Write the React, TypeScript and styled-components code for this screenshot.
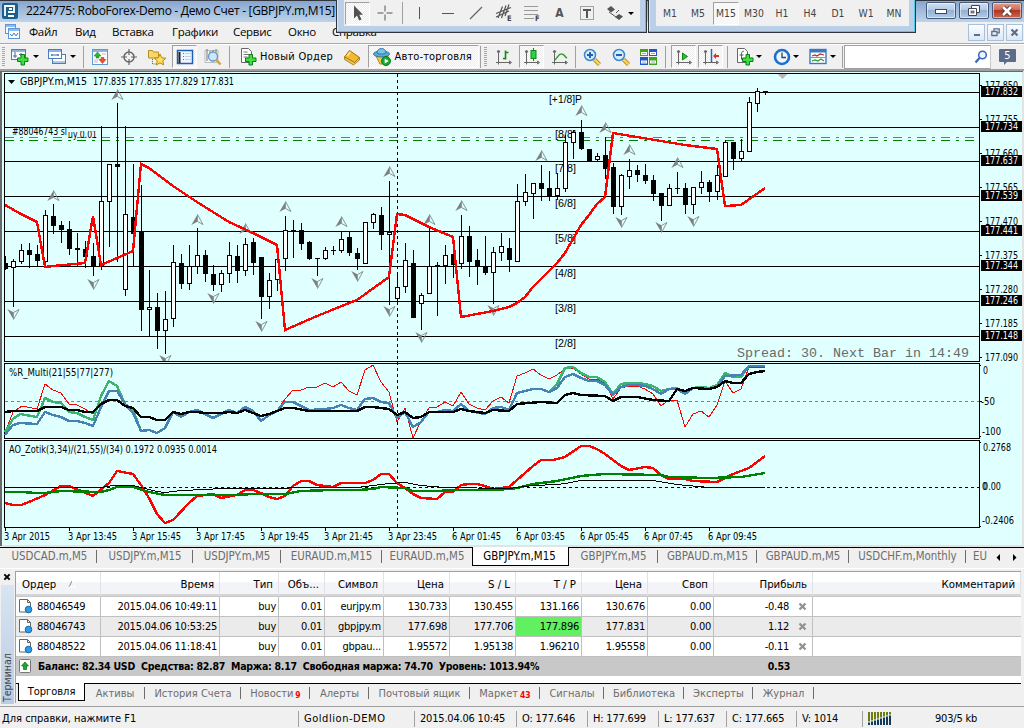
import styled, {createGlobalStyle} from "styled-components";
import * as React from "react";

type Candle = [number, number, number, number, number];

// high, body top, body bottom, low, 1 = rising
const candles: Candle[] = [
    [256, 263, 268, 269, 0], [259, 261, 267, 306, 1], [244, 250, 261, 263, 1], [243, 250, 254, 267, 0],
    [245, 254, 260, 266, 0], [210, 215, 261, 267, 1], [204, 216, 225, 233, 0], [221, 225, 229, 242, 0],
    [221, 229, 248, 254, 0], [233, 248, 249, 265, 0], [241, 249, 256, 267, 0], [243, 256, 266, 275, 0],
    [126, 201, 265, 269, 1], [164, 164, 201, 246, 1], [103, 164, 166, 261, 0], [126, 214, 289, 295, 1],
    [164, 217, 233, 266, 0], [185, 231, 309, 330, 0], [270, 307, 309, 336, 1], [293, 307, 330, 348, 0],
    [291, 319, 330, 353, 1], [245, 262, 318, 326, 1], [254, 263, 283, 288, 0], [245, 266, 283, 289, 1],
    [228, 255, 266, 273, 1], [250, 255, 273, 281, 0], [265, 274, 284, 290, 0], [270, 273, 284, 291, 1],
    [242, 255, 273, 282, 1], [245, 256, 270, 282, 0], [238, 244, 270, 275, 1], [238, 242, 262, 274, 0],
    [257, 257, 296, 318, 0], [273, 280, 296, 308, 1], [254, 259, 279, 290, 1], [216, 230, 258, 270, 1],
    [220, 230, 231, 257, 0], [223, 230, 243, 249, 0], [241, 242, 258, 259, 0], [258, 258, 258, 275, 0],
    [247, 250, 258, 259, 1], [246, 250, 250, 254, 0], [232, 239, 250, 252, 1], [232, 237, 252, 255, 0],
    [248, 253, 258, 269, 0], [222, 222, 263, 263, 1], [213, 214, 222, 228, 1], [207, 215, 234, 249, 0],
    [181, 232, 234, 304, 1], [272, 287, 298, 300, 1], [243, 260, 286, 292, 1], [250, 263, 317, 317, 0],
    [293, 295, 303, 329, 1], [228, 266, 293, 293, 1], [262, 265, 265, 315, 0], [245, 255, 265, 283, 1],
    [246, 254, 264, 277, 0], [215, 236, 263, 268, 1], [226, 236, 261, 276, 0], [249, 260, 266, 284, 0],
    [236, 267, 272, 274, 0], [247, 252, 272, 303, 1], [233, 246, 252, 260, 1], [238, 248, 259, 271, 0],
    [184, 201, 261, 261, 1], [174, 192, 201, 205, 1], [183, 183, 193, 218, 1], [165, 183, 188, 200, 0],
    [171, 188, 196, 200, 0], [173, 188, 195, 199, 1], [135, 142, 188, 191, 1], [130, 132, 142, 158, 1],
    [120, 132, 148, 149, 0], [149, 149, 160, 161, 0], [153, 156, 159, 161, 1], [137, 155, 168, 178, 0],
    [163, 167, 206, 213, 0], [174, 175, 206, 214, 1], [159, 170, 176, 188, 1], [165, 170, 174, 181, 0],
    [164, 175, 180, 183, 0], [175, 180, 193, 200, 0], [193, 193, 205, 220, 0], [184, 188, 205, 205, 1],
    [172, 188, 188, 193, 0], [183, 188, 204, 213, 0], [187, 187, 204, 213, 1], [171, 182, 187, 193, 1],
    [180, 182, 191, 201, 0], [165, 175, 191, 199, 1], [140, 142, 176, 176, 1], [142, 142, 158, 169, 0],
    [139, 151, 158, 160, 1], [97, 102, 151, 151, 1], [88, 91, 103, 111, 1], [91, 91, 92, 94, 0],
];

const levels = [
    {y: 92, price: "177.832"}, {y: 127, price: "177.734"}, {y: 161, price: "177.637"}, {y: 196, price: "177.539"},
    {y: 231, price: "177.441"}, {y: 266, price: "177.344"}, {y: 301, price: "177.246"}, {y: 336, price: "177.148"},
];
const murrey = ["[8/8]", "[7/8]", "[6/8]", "[5/8]", "[4/8]", "[3/8]", "[2/8]"];
const scale = ["177.850", "177.755", "177.660", "177.565", "177.470", "177.375", "177.280", "177.185", "177.090"];
const times = ["3 Apr 2015", "3 Apr 13:45", "3 Apr 15:45", "3 Apr 17:45", "3 Apr 19:45", "3 Apr 21:45", "3 Apr 23:45",
    "6 Apr 01:45", "6 Apr 03:45", "6 Apr 05:45", "6 Apr 07:45", "6 Apr 09:45"];

const upFractals = [[53, 195], [117, 94], [197, 219], [245, 228], [285, 206], [341, 221], [389, 171], [429, 219],
    [461, 205], [541, 155], [581, 110], [605, 127], [629, 149], [677, 162]];
const downFractals = [[13, 314], [93, 284], [165, 360], [213, 298], [261, 326], [317, 283], [357, 276], [389, 311],
    [421, 337], [493, 310], [621, 222], [661, 227], [693, 221]];

const stopLine = "5,205 21,214 37,222 45,267 53,266 85,263 93,216 101,265 133,251 141,164 149,168 173,186 197,202 229,222 253,233 277,245 285,330 301,323 317,316 357,300 375,287 389,277 397,214 405,215 429,227 453,237 461,317 477,314 493,311 509,307 517,303 525,297 533,287 549,271 557,263 565,253 573,239 581,225 589,215 597,204 605,197 613,133 637,137 661,141 685,145 717,149 725,206 741,205 765,188";
const wprRed = "5,433 13,412 22,406 37,409 45,384 53,390 61,393 69,404 77,405 85,409 93,414 101,404 109,391 117,391 125,404 133,413 141,431 149,430 157,433 165,428 173,412 181,417 189,412 197,410 213,418 221,414 229,410 237,413 245,407 253,411 261,421 269,415 277,411 285,399 293,390 301,390 309,387 317,387 325,383 333,387 341,382 349,391 357,395 365,370 373,365 381,382 389,392 397,422 405,408 413,438 421,421 429,408 437,407 445,402 453,406 461,392 469,404 477,408 485,410 493,401 501,397 509,403 517,376 525,373 533,369 541,375 549,379 557,375 565,369 573,368 581,374 589,379 597,379 605,383 613,399 621,388 629,386 637,386 645,389 653,394 661,406 669,400 677,400 685,427 693,414 701,411 709,417 717,405 725,381 733,393 741,389 749,367 765,367";
const wprGreenStart = "5,432 13,419 20,414 37,417 45,398 53,402 61,403 69,412 77,413 85,417 93,420 101,396 109,381 117,386 125,404 133,410 141,431";
const wprGreenEnd = "549,392 557,384 565,368 573,367 581,373 589,377 597,377 605,382 613,394 621,384 629,383 637,383 645,384 653,386 661,391 669,389 677,388 685,393 693,388 701,387 709,388 717,385 725,373 733,377 741,377 749,366 765,366";
const wprBlue = "5,435 13,425 20,423 37,424 45,412 53,415 61,417 69,421 77,421 85,423 93,426 101,407 109,391 117,391 125,404 133,413 141,431 149,430 157,433 165,428 173,412 181,417 189,412 197,410 213,418 221,414 229,410 237,413 245,407 253,411 261,421 269,415 277,411 285,402 293,402 309,410 325,409 333,408 341,405 349,408 357,410 365,399 373,398 381,402 389,403 397,418 405,412 413,427 421,422 429,412 437,412 445,410 453,411 461,404 469,411 485,414 493,408 501,407 509,410 517,393 525,391 533,389 541,389 549,392 557,388 565,377 573,374 581,378 589,381 597,381 605,385 613,395 621,387 629,385 637,385 645,386 653,389 661,394 669,389 677,389 685,394 693,388 709,389 717,387 725,376 741,375 749,366 765,366";
const wprBlack = "5,412 13,411 37,411 45,407 61,407 69,410 77,410 85,412 93,412 101,404 109,400 117,400 125,406 133,408 141,417 149,417 157,420 165,420 173,412 181,414 189,412 197,412 205,413 221,413 229,412 237,413 245,410 261,416 269,414 277,411 285,408 293,408 309,411 357,411 365,407 373,407 389,409 397,415 405,412 413,418 421,417 429,412 453,412 461,409 469,411 485,413 493,410 509,411 517,404 541,402 557,403 565,395 573,393 581,395 605,396 613,401 621,397 637,397 653,400 669,401 677,389 685,391 693,388 709,389 717,387 725,381 733,383 741,383 749,374 757,372 765,371";
const aoRed = "5,503 13,505 21,505 29,502 45,495 61,486 69,486 93,496 109,483 117,471 133,474 141,485 149,498 157,514 165,523 173,520 189,503 197,496 213,494 221,498 237,495 245,490 253,490 261,493 269,497 277,499 285,496 293,486 301,481 309,481 317,485 333,487 341,483 365,483 373,480 381,474 389,474 397,483 405,488 413,494 421,498 437,499 445,492 453,492 461,485 469,484 477,484 485,486 493,489 509,487 517,480 533,466 541,460 553,460 565,457 581,446 589,446 597,449 605,454 621,466 629,470 645,467 653,468 661,475 669,479 685,479 693,481 717,482 733,474 749,468 765,456";
const aoGreen = "5,492 21,492 37,493 45,493 61,491 101,492 109,490 117,487 133,487 149,492 165,495 237,495 253,494 285,494 301,491 333,490 357,490 373,489 381,487 405,488 413,491 437,491 453,490 493,490 509,489 517,488 533,484 557,481 581,476 605,474 661,475 669,477 709,478 741,477 765,473";
const aoBlack = "5,487 101,487 113,485 133,485 157,491 165,492 181,490 205,489 221,488 285,488 293,487 357,487 365,486 373,485 389,483 405,482 421,485 445,487 509,488 533,485 557,484 565,483 581,480 653,480 677,484 709,487 765,487";

const Label = ({x, y, w, children, fill = "#000"}: {x: number, y: number, w: number, children: string, fill?: string}) => (
    <text x={x} y={y} textLength={w} lengthAdjust="spacingAndGlyphs" fill={fill} xmlSpace="preserve">{children}</text>
);

const Fractal = ({x, y, down}: {x: number, y: number, down?: boolean}) => (
    <g transform={`translate(${x + 0.5} ${y + 0.5}) scale(1 ${down ? -1 : 1})`}>
        <path d="M.3 -5.5 L-6.2 5.5 L.3 2 Z" fill="#808080"/>
        <path d="M0 -5 L5.500 5 L0 2" stroke="#808888" strokeWidth="0.9" fill="none"/>
    </g>
);

const Chart = () => (
    <ChartSvg viewBox="0 71 1024 476" width="1024" height="476">
        <defs>
            <clipPath id="plot"><rect x="5" y="74" width="974" height="287"/></clipPath>
            <clipPath id="buyLine"><rect x="67" y="131" width="60" height="12"/></clipPath>
        </defs>
        <g shapeRendering="crispEdges">
            <rect x="0" y="71" width="1024" height="476" fill="#f0f0f0"/>
            <rect x="0" y="71" width="1023" height="475" fill="#696969"/>
            <rect x="2" y="72" width="1022" height="475" fill="#e3e3e3"/>
            <rect x="2" y="72" width="1020" height="473" fill="#e0ffff"/>
        </g>
        <g shapeRendering="crispEdges" stroke="#000" fill="none">
            <rect x="4.5" y="73.5" width="975" height="288"/>
            <rect x="4.5" y="363.5" width="975" height="75"/>
            <rect x="4.5" y="440.5" width="975" height="87"/>
            {levels.map(l => <path key={l.y} d={`M5 ${l.y + 0.5}H979`}/>)}
            <path d="M5 137.5H979" stroke="#ff4500" strokeDasharray="9 6 3 6"/>
            <path d="M5 140.5H979" stroke="#008000" strokeDasharray="9 6 3 6"/>
            <path d="M397.5 74V527" strokeDasharray="3 3"/>
            <path d="M5 401.5H979" stroke="#808080" strokeDasharray="3 3"/>
            <path d="M5 487.5H982" strokeDasharray="3 3"/>
            {scale.map((s, i) => <path key={s} d={`M980 ${85.5 + i * 34}h2`}/>)}
            <path d="M980 365.5h1M980 401.5h2M980 436.5h1M980 442.5h1M980 526.5h1"/>
            {times.map((t, i) => <path key={t} d={`M${5.5 + i * 64} 528v3`}/>)}
        </g>
        <g fontFamily="Liberation Sans, sans-serif" fontSize="10.5" fill="#000">
            <Label x={549} y={103} w={33}>[+1/8]P</Label>
            {murrey.map((m, i) => <Label key={m} x={555} y={levels[i + 1].y + 11} w={21}>{m}</Label>)}
        </g>
        <g clipPath="url(#plot)">
            {upFractals.map(([x, y]) => <Fractal key={x} x={x} y={y}/>)}
            {downFractals.map(([x, y]) => <Fractal key={x} x={x} y={y} down/>)}
            <g shapeRendering="crispEdges">
                {candles.map(([h, t, b, l, up], i) => {
                    const x = 5 + i * 8;
                    return (
                        <g key={i}>
                            <rect x={x} y={h} width="1" height={l - h + 1}/>
                            <rect x={x - 2} y={t} width="5" height={b - t + 1}/>
                            {up === 1 && <rect x={x - 1} y={t + 1} width="3" height={Math.max(b - t - 1, 1)} fill="#fff"/>}
                        </g>
                    )
                })}
                <polyline points={stopLine} stroke="#f00" strokeWidth="2.4" fill="none"/>
            </g>
        </g>
        <g shapeRendering="crispEdges" fill="none" strokeWidth="2.4" strokeLinejoin="round">
            <polyline points={wprRed} stroke="#f00" strokeWidth="1"/>
            <polyline points={wprGreenStart} stroke="#3cb371"/>
            <polyline points={wprGreenEnd} stroke="#3cb371"/>
            <polyline points={wprBlue} stroke="#4682b4"/>
            <polyline points={wprBlack} stroke="#000"/>
            <polyline points={aoRed} stroke="#f00"/>
            <polyline points={aoGreen} stroke="#008000"/>
            <polyline points={aoBlack} stroke="#000" strokeWidth="1" transform="translate(0 0.5)"/>
        </g>
        <path d="M8 80h7l-3.5 4z"/>
        <path d="M777.5 74h10l-5 5z" fill="#b8b8b8"/>
        <g fontFamily="DejaVu Sans Condensed, sans-serif" fontSize="10">
            <Label x={20} y={85} w={67}>GBPJPY.m,M15</Label>
            <Label x={93} y={85} w={141}>177.835 177.835 177.829 177.831</Label>
            <Label x={12} y={135} w={55}>#88046743 sl</Label>
            <g clipPath="url(#buyLine)"><Label x={68} y={137.5} w={29}>uy 0.01</Label></g>
            <Label x={9} y={376} w={104}>%R_Multi(21|55|77|277)</Label>
            <Label x={9} y={453} w={208}>AO_Zotik(3,34)/(21,55)/(34) 0.1972 0.0935 0.0014</Label>
            {scale.map((s, i) => <Label key={s} x={985} y={88.5 + i * 34} w={33}>{s}</Label>)}
            {levels.map(l => (
                <g key={l.y}>
                    <rect x="981" y={l.y - 6} width="41" height="11"/>
                    <Label x={985} y={l.y + 3} w={33} fill="#fff">{l.price}</Label>
                </g>
            ))}
            <Label x={983} y={374} w={5}>0</Label>
            <Label x={981} y={405} w={14}>-50</Label>
            <Label x={982} y={435} w={19}>-100</Label>
            <Label x={983} y={451} w={28}>0.2768</Label>
            <Label x={982} y={490} w={5}>0</Label>
            <Label x={983} y={490} w={18}>0.00</Label>
            <Label x={982} y={524} w={32}>-0.2406</Label>
            {times.map((t, i) => <Label key={t} x={4 + i * 64} y={540} w={i === 0 ? 46 : 49}>{t}</Label>)}
        </g>
        <g fontFamily="Liberation Mono, monospace" fontSize="13.3">
            <Label x={737} y={357} w={232} fill="#696969">Spread: 30. Next Bar in 14:49</Label>
        </g>
    </ChartSvg>
);

const Icon = ({children, size = 18}: {children: React.ReactNode, size?: number}) => (
    <svg width={size} height={size} viewBox="0 0 18 18" fill="none">{children}</svg>
);

const Plus = ({x = 6, y = 6}: {x?: number, y?: number}) => (
    <path transform={`translate(${x} ${y})`} d="M4 .5h3.500V4H11v3.500H7.500V11H4V7.500H.5V4H4z" fill="#3fe03f" stroke="#0b7d14"/>
);

const NewChartIcon = () => (
    <Icon><rect x=".5" y="1.500" width="14" height="10" fill="#fff" stroke="#4a7ebb"/><path d="M1 3h13" stroke="#8db4e2" strokeWidth="2"/><path d="M4 4v6M2 8h4M10 5v3M8 6.500h4" stroke="#3c6da8"/><Plus/></Icon>
);
const ProfilesIcon = () => (
    <Icon><rect x="4.500" y="6.500" width="13" height="9" fill="#fff" stroke="#4a7ebb"/><path d="M5 14h12" stroke="#a9c8ea" strokeWidth="2"/><rect x=".5" y="1.500" width="13" height="9" fill="#fff" stroke="#4a7ebb"/><path d="M1 3h12" stroke="#8db4e2" strokeWidth="2"/><path d="M3 7h8M4 6v2M10 6v2" stroke="#3c6da8"/></Icon>
);
const MarketWatchIcon = () => (
    <Icon><rect x="1.500" y="1.500" width="15" height="15" fill="#fff" stroke="#5b9bd5"/><path d="M2 3h14" stroke="#8db4e2" strokeWidth="2"/><path d="M6.500 4l3.500 4H8v2H5V8H3z" fill="#2fb52f" stroke="#11751a" strokeWidth=".5"/><path d="M11.500 15.500l-3.500-4h2v-2h3v2h2z" fill="#e8542c" stroke="#a03010" strokeWidth=".5"/><path d="M11 6h4M3 12h4M3 14h4" stroke="#bbb"/></Icon>
);
const CrosshairIcon = () => (
    <Icon><circle cx="9" cy="9" r="5" stroke="#666" strokeWidth="1.500"/><path d="M9 1v6M9 11v6M1 9h6M11 9h6" stroke="#666" strokeWidth="1.200"/></Icon>
);
const NavigatorIcon = () => (
    <Icon><path d="M.5 2.500h4l1 1.500h5v6h-10z" fill="#f7d66b" stroke="#b98d1d"/><path d="M4.500 11v5h4" stroke="#666" strokeDasharray="1 1"/><path d="M12 6l1.800 3.800 4 .4-3 2.700.9 4-3.700-2-3.600 2 .9-4-3-2.700 4-.4z" fill="#ffe05c" stroke="#bb8410"/></Icon>
);
const TerminalIcon = () => (
    <Icon><rect x="1.500" y="2.500" width="15" height="13" fill="#eef5ff" stroke="#1c61b8" strokeWidth="1.500"/><path d="M3.500 4v11" stroke="#222" strokeWidth="2"/><path d="M7 5.500h1M7 8.500h1M7 11.500h1" stroke="#e33"/><path d="M9 5.500h6M9 8.500h6M9 11.500h6" stroke="#bcd2ee"/></Icon>
);
const TesterIcon = () => (
    <Icon><path d="M1 2.500h13v12H1z" fill="#f8f8f8" stroke="#bbb"/><path d="M3 1v12M6 3v5M9 2v5M12 1v4" stroke="#777"/><circle cx="9" cy="8.500" r="4.500" fill="#cde6f8" stroke="#6699c4" strokeWidth="1.300"/><path d="M12.500 12l4 4.500" stroke="#d8a42c" strokeWidth="2.500"/></Icon>
);
const OrderIcon = () => (
    <Icon><path d="M2.500.5h7l3 3v11h-10z" fill="#fff" stroke="#666"/><path d="M4.500 4h4M4.500 6.500h6M4.500 9h4" stroke="#777"/><Plus/></Icon>
);
const BookIcon = () => (
    <Icon><path d="M1.500 9l5-6.500 10 7-5 5z" fill="#f5b92e" stroke="#a4700c"/><path d="M1.500 9v2.500l9 5.500 6-5V9.500l-5 5z" fill="#e8c766" stroke="#a4700c" strokeWidth=".8"/><path d="M4 8l3.500-4" stroke="#ffe9a0" strokeWidth="1.500"/></Icon>
);
const ExpertIcon = () => (
    <Icon><path d="M3 8l4 8h5l3-8z" fill="#f4c84a" stroke="#b98412"/><ellipse cx="8.500" cy="6" rx="8" ry="3" fill="#5aa9d6" stroke="#2e78a8"/><path d="M4 5c0-6 9-6 9 0-2 1.500-7 1.500-9 0z" fill="#7cc4ea" stroke="#2e78a8"/><circle cx="13" cy="13" r="4.500" fill="#18a832" stroke="#0a7a1e"/><path d="M11.700 10.500v5l4-2.500z" fill="#fff"/></Icon>
);
const AxisBase = () => <path d="M3.500 3v13.500M1 14.500h14.500M3.500 2l-1.500 2h3zM16.500 14.500l-2-1.500v3z" stroke="#666" strokeWidth="1"/>;
const BarsIcon = () => <Icon><AxisBase/><path d="M10.500 2.500v9M8 10.500h2.500M10.500 4.500h3" stroke="#128a12" strokeWidth="1.600"/></Icon>;
const CandleIcon = () => <Icon><AxisBase/><path d="M10.500 0v13" stroke="#128a12"/><rect x="8" y="2.500" width="5" height="8" fill="#23d34a" stroke="#128a12"/></Icon>;
const LineIcon = () => <Icon><AxisBase/><path d="M4 12c3-3 4-7 7-6 2 0 3 3 5 4" stroke="#2a9d2a" strokeWidth="1.400"/></Icon>;
const ZoomIcon = ({plus}: {plus?: boolean}) => (
    <Icon><path d="M11.500 11.500l5 5" stroke="#a87b16" strokeWidth="4"/><path d="M11.500 11.500l5 5" stroke="#f7d35c" strokeWidth="2.500"/><circle cx="7" cy="7" r="5.500" fill="#d3edfd" stroke="#3a86d0" strokeWidth="1.500"/><path d={plus ? "M4 7h6M7 4v6" : "M4 7h6"} stroke="#2760a8" strokeWidth="2"/></Icon>
);
const TileIcon = () => (
    <Icon><path d="M1 1h8v7H1zM10 9h8v8h-8z" fill="#41a41c"/><path d="M10 1h8v7h-8zM1 9h8v8H1z" fill="#2456c8"/><path d="M2 5.500h6M11 5.500h6M2 14h6M11 14h6" stroke="#fff" strokeWidth="3"/><path d="M3 5.500h4M12 5.500h4M3 14h4M12 14h4" stroke="#9ab"/></Icon>
);
const ScrollIcon = () => <Icon><AxisBase/><path d="M7.500 5v7l5-3.500z" fill="#22c03c" stroke="#128a12"/></Icon>;
const ShiftIcon = () => <Icon><AxisBase/><path d="M9.500 1v13" stroke="#2468b0" strokeWidth="1.500"/><path d="M11 8l3-3v2h3v2h-3v2z" fill="#d03a1a"/></Icon>;
const IndicatorIcon = () => <Icon><path d="M1.500.5h7l3 3v11h-10z" fill="#fff" stroke="#666"/><path d="M8 3.500c-2-1-2.500 1-2.500 3v5M3.500 7h4" stroke="#555"/><Plus/></Icon>;
const ClockIcon = () => <Icon><circle cx="9" cy="9" r="7" fill="#eef6fe" stroke="#1c6fd0" strokeWidth="2.600"/><path d="M9 4.500V9.500h4" stroke="#345" strokeWidth="1.300"/></Icon>;
const TemplateIcon = () => (
    <Icon><rect x="1" y="1.500" width="16" height="14" fill="#fff" stroke="#3a78c0" strokeWidth="1.400"/><path d="M1 3h16" stroke="#3a78c0" strokeWidth="3"/><path d="M3 8l3-1 2 1 3-2 4 1" stroke="#b03020" strokeWidth="1.200"/><path d="M2 9.500h14" stroke="#777" strokeWidth=".8"/><path d="M3 13l3-1 3 1 3-2 3 2" stroke="#2a9a3a" strokeWidth="1.200"/></Icon>
);

const DrawToolbar = () => (
    <Floating $left={336} $width={311}>
        <FloatBody>
            <Press $w={25}><Icon><path d="M5 1.500V14.500L8 11.500L10.200 16.500L12.500 15.500L10.300 10.700H14z" fill="#505050"/></Icon></Press>
            <Slot $w={30}><Icon><path d="M9 1.500v6M9 10.500v6M1.500 9h6M10.500 9h6" stroke="#555"/></Icon></Slot>
            <Sep $ml={2} $h={22}/>
            <Slot $w={30} $ml={1}><Icon><path d="M9.500 3v12" stroke="#555"/></Icon></Slot>
            <Slot $w={28}><Icon><path d="M3 9.500h12" stroke="#555"/></Icon></Slot>
            <Slot $w={28}><Icon><path d="M3 15L15 3" stroke="#666" strokeWidth="1.200"/></Icon></Slot>
            <Slot $w={27}>
                <Icon><path d="M3 14L7.500 2.500M6.500 14L11 1.500M10 12L14 .5M1 9.500L16 3.500M1 13L14 7" stroke="#555" strokeWidth="1.200"/><text x="12" y="17" fontSize="7.500" fontWeight="bold" fill="#444" fontFamily="DejaVu Sans Condensed">E</text></Icon>
            </Slot>
            <Slot $w={29}>
                <Icon><path d="M1.500 2.500h14M1.500 6.500h14M1.500 10.500h14M1.500 14.500h9" stroke="#444" strokeDasharray="1 1"/><text x="12" y="17" fontSize="7.500" fontWeight="bold" fill="#444" fontFamily="DejaVu Sans Condensed">F</text></Icon>
            </Slot>
            <Slot $w={27}><ToolLetter>A</ToolLetter></Slot>
            <Slot $w={28}>
                <Icon><rect x="2.500" y="2.500" width="13" height="13" stroke="#555" strokeDasharray="1 1"/><path d="M5 6h8M9 6v8" stroke="#555" strokeWidth="2"/></Icon>
            </Slot>
            <Slot $w={28}><Icon><path d="M5 2l4 3.500-4 3-4-3.500zM13 10l4 2.500-4 3.500-4-3z" fill="#555"/><path d="M3 8l7 5M10 9l3-3" stroke="#555"/></Icon></Slot>
            <Arrow $w={4}/>
        </FloatBody>
    </Floating>
);

const frames = ["M1", "M5", "M15", "M30", "H1", "H4", "D1", "W1", "MN"];

const FrameToolbar = () => (
    <Floating $left={648} $width={268}>
        <FloatBody>
            <Frames>
                {frames.map(f => <Timeframe key={f} $active={f === "M15"}>{f}</Timeframe>)}
            </Frames>
        </FloatBody>
    </Floating>
);

const menu = [
    {t: "Файл", w: 46}, {t: "Вид", w: 37}, {t: "Вставка", w: 60}, {t: "Графики", w: 61},
    {t: "Сервис", w: 55}, {t: "Окно", w: 44}, {t: "Справка", w: 60},
];

const chartTabs = [
    {t: "USDCAD.m,M5", w: 95}, {t: "USDJPY.m,M15", w: 96}, {t: "USDJPY.m,M5", w: 88}, {t: "EURAUD.m,M15", w: 101},
    {t: "EURAUD.m,M5", w: 90}, {t: "GBPJPY.m,M15", w: 97}, {t: "GBPJPY.m,M5", w: 89}, {t: "GBPAUD.m,M15", w: 99},
    {t: "GBPAUD.m,M5", w: 92}, {t: "USDCHF.m,Monthly", w: 117}, {t: "EU", w: 28},
];

const headers = ["Ордер", "Время", "Тип", "Объ...", "Символ", "Цена", "S / L", "T / P", "Цена", "Своп", "Прибыль", "Комментарий"];
const orders = [
    ["88046549", "2015.04.06 10:49:11", "buy", "0.01", "eurjpy.m", "130.733", "130.455", "131.166", "130.676", "0.00", "-0.48"],
    ["88046743", "2015.04.06 10:53:25", "buy", "0.01", "gbpjpy.m", "177.698", "177.706", "177.896", "177.831", "0.00", "1.12"],
    ["88048522", "2015.04.06 11:18:41", "buy", "0.01", "gbpau...", "1.95572", "1.95138", "1.96210", "1.95558", "0.00", "-0.11"],
];

const terminalTabs = [
    {t: "Торговля", w: 67}, {t: "Активы", w: 60}, {t: "История Счета", w: 96}, {t: "Новости", w: 69, n: "9"},
    {t: "Алерты", w: 59}, {t: "Почтовый ящик", w: 101}, {t: "Маркет", w: 70, n: "43"}, {t: "Сигналы", w: 64},
    {t: "Библиотека", w: 80}, {t: "Эксперты", w: 69}, {t: "Журнал", w: 61},
];

const status = [
    {t: "Goldlion-DEMO", w: 116, ls: 0.55}, {t: "2015.04.06 10:45", w: 102}, {t: "O: 177.646", w: 71}, {t: "H: 177.699", w: 71},
    {t: "L: 177.637", w: 68}, {t: "C: 177.665", w: 70}, {t: "V: 1014", w: 66},
];

const Cross = ({color = "#909090", size = 9}: {color?: string, size?: number}) => (
    <svg width={size} height={size} viewBox="0 0 9 9"><path d="M1.500 1.500l6 6M7.500 1.500l-6 6" stroke={color} strokeWidth="2.200"/></svg>
);

export default function App() {
    return (
        <Window>
            <Global/>
            <TitleBar>
                <svg width="16" height="16" viewBox="0 0 16 16">
                    <rect width="16" height="16" rx="2" fill="#1d5f8c"/>
                    <path d="M3 13V3h9v6H6M6 13h6M7 6h3" stroke="#fff" strokeWidth="1.800" fill="none"/>
                </svg>
                <Title>2224775: RoboForex-Demo - Демо Счет - [GBPJPY.m,M15]</Title>
                <CaptionButton>
                    <svg width="12" height="6"><rect x=".5" y="1.500" width="11" height="4" fill="#fff" stroke="#445"/></svg>
                </CaptionButton>
                <CaptionButton>
                    <svg width="14" height="12"><path d="M4.500.5h8v7h-8z" fill="#fff" stroke="#445"/><path d="M1.500 3.500h8v7h-8z" fill="#fff" stroke="#445"/><rect x="4" y="6" width="3" height="2" fill="#8aa6cc" stroke="#445" strokeWidth=".7"/></svg>
                </CaptionButton>
                <CaptionButton $close>
                    <svg width="14" height="12" viewBox="0 0 14 12"><path d="M3 2l8 8M11 2l-8 8" stroke="#533" strokeWidth="4.500"/><path d="M3 2l8 8M11 2l-8 8" stroke="#fff" strokeWidth="2.600"/></svg>
                </CaptionButton>
            </TitleBar>
            <MenuBar>
                <svg width="15" height="15" viewBox="0 0 15 15">
                    <rect x=".5" y=".5" width="10" height="9" fill="#fff" stroke="#5a96d8"/><rect x="3.500" y="4.500" width="11" height="10" fill="#fff" stroke="#5a96d8"/>
                    <path d="M1 2h9M4 6h10" stroke="#8dbcf0" strokeWidth="2"/><path d="M5 10l2 2 2-3 2 3 2-3" stroke="#4a7ebb" fill="none"/>
                </svg>
                <MenuItems>
                    {menu.map(m => <MenuItem key={m.t} $w={m.w}>{m.t}</MenuItem>)}
                </MenuItems>
                <MdiButton><svg width="8" height="8"><rect x="1" y="5" width="6" height="2" fill="#5b6f88"/></svg></MdiButton>
                <MdiButton><svg width="9" height="9"><path d="M3 3V.8h5.200v4H6M.8 3.500H6v4H.8z" fill="none" stroke="#5b6f88" strokeWidth="1.300"/></svg></MdiButton>
                <MdiButton><Cross color="#5b6f88"/></MdiButton>
            </MenuBar>
            <Toolbar>
                <Grip/>
                <Slot $w={25}><NewChartIcon/></Slot>
                <Arrow $w={8}/>
                <Slot $w={25} $ml={4}><ProfilesIcon/></Slot>
                <Arrow $w={8}/>
                <Sep $ml={6}/>
                <Slot $w={24} $ml={4}><MarketWatchIcon/></Slot>
                <Slot $w={33}><CrosshairIcon/></Slot>
                <Slot $w={23}><NavigatorIcon/></Slot>
                <Press $w={25} $ml={4}><TerminalIcon/></Press>
                <Slot $w={26} $ml={3}><TesterIcon/></Slot>
                <Sep $ml={3}/>
                <Slot $w={24} $ml={6}><OrderIcon/></Slot>
                <ToolText $w={80} $ls={0.28}>Новый Ордер</ToolText>
                <Slot $w={24}><BookIcon/></Slot>
                <Press $w={111} $ml={4}>
                    <ExpertIcon/>
                    <ToolText $w={84} $pl={4} $ls={0.14}>Авто-торговля</ToolText>
                </Press>
                <Sep $ml={1}/>
                <Grip $ml={1}/>
                <Slot $w={26} $ml={2}><BarsIcon/></Slot>
                <Press $w={25} $ml={2}><CandleIcon/></Press>
                <Slot $w={27} $ml={2}><LineIcon/></Slot>
                <Sep $ml={2}/>
                <Slot $w={26} $ml={3}><ZoomIcon plus/></Slot>
                <Slot $w={26} $ml={3}><ZoomIcon/></Slot>
                <Slot $w={24} $ml={2}><TileIcon/></Slot>
                <Sep $ml={5}/>
                <Press $w={25} $ml={5}><ScrollIcon/></Press>
                <Press $w={25} $ml={2}><ShiftIcon/></Press>
                <Sep $ml={4}/>
                <Slot $w={22} $ml={6}><IndicatorIcon/></Slot>
                <Arrow $w={6}/>
                <Slot $w={23} $ml={8}><ClockIcon/></Slot>
                <Arrow $w={6}/>
                <Slot $w={22} $ml={8}><TemplateIcon/></Slot>
                <Arrow $w={8}/>
                <Sep $ml={5}/>
                <Search>
                    <svg width="14" height="14" viewBox="0 0 14 14"><circle cx="8.500" cy="5" r="3.800" fill="#eef4ff" stroke="#3a62c0" strokeWidth="1.500"/><path d="M5.500 8L1.500 12.500" stroke="#3a62c0" strokeWidth="2.200"/></svg>
                </Search>
                <ChatSlot><Chat>5</Chat></ChatSlot>
            </Toolbar>
            <Chart/>
            <ChartTabs>
                {chartTabs.map((tab, i) => (
                    <ChartTab key={tab.t} $w={tab.w} $active={i === 5} $line={i !== 4 && i < 10}>{tab.t}</ChartTab>
                ))}
                <TabArrows>
                    <svg width="24" height="8"><path d="M5 0v7L1.500 3.500zM18 0v7l3.500-3.500z" fill="#000"/></svg>
                </TabArrows>
            </ChartTabs>
            <Terminal>
                <Side>
                    <SideClose><Cross color="#000" size={8}/></SideClose>
                    <SideStrip>Терминал</SideStrip>
                </Side>
                <Panel>
                    <HeadRow>
                        {headers.map((h, i) => (
                            <HeadCell key={i} $left={i === 0}>
                                {h}
                                {i === 0 && <svg width="9" height="8"><path d="M1 7L4 1" stroke="#888" fill="none"/><path d="M4 1l4 6H1" stroke="#fff" fill="none"/></svg>}
                            </HeadCell>
                        ))}
                    </HeadRow>
                    {orders.map((row, r) => (
                        <OrderRow key={row[0]} $alt={r === 1}>
                            {row.map((c, i) => (
                                <Cell key={i} $left={i === 0} $hit={r === 1 && i === 7}>
                                    {i === 0 && (
                                        <svg width="15" height="16" viewBox="0 0 15 16"><path d="M1.500 1.500h8l3 3v9.500h-11z" fill="#fff" stroke="#666"/><path d="M9.500 1.500v3h3" stroke="#666" fill="none"/><circle cx="10.500" cy="11.500" r="3.300" fill="#2c9be8" stroke="#1768a8"/></svg>
                                    )}
                                    <span>{c}</span>
                                    {i === 10 && <CloseMark><Cross/></CloseMark>}
                                </Cell>
                            ))}
                        </OrderRow>
                    ))}
                    <Summary>
                        <svg width="13" height="15" viewBox="0 0 13 15"><rect x=".5" y=".5" width="11" height="13" rx="1" fill="#fff" stroke="#777"/><path d="M6 3l3.500 4H7.500v3.500h-3V7H2.500z" fill="#1ea62e" stroke="#0b7015" strokeWidth=".7"/></svg>
                        <Balance>Баланс: 82.34 USD&nbsp; Средства: 82.87&nbsp; Маржа: 8.17&nbsp; Свободная маржа: 74.70&nbsp; Уровень: 1013.94%</Balance>
                        <Total>0.53</Total>
                    </Summary>
                    <TerminalTabs>
                        {terminalTabs.map((tab, i) => (
                            <TerminalTab key={tab.t} $w={tab.w} $active={i === 0}>
                                {tab.t}{tab.n && <Count>{tab.n}</Count>}
                            </TerminalTab>
                        ))}
                    </TerminalTabs>
                </Panel>
            </Terminal>
            <StatusBar>
                <StatusHelp>Для справки, нажмите F1</StatusHelp>
                {status.map(s => <StatusCell key={s.t} $w={s.w} $ls={s.ls}>{s.t}</StatusCell>)}
                <StatusCell $w={162}>
                    <svg width="24" height="13">
                        {[0, 1, 2, 3, 4, 5, 6, 7].map(i => (
                            <g key={i}>
                                <rect x={i * 3} y="0" width="2" height={9.500 - i} fill="#6b7f10"/>
                                <rect x={i * 3} y={10.500 - i} width="2" height={2.500 + i} fill="#0e3a5c"/>
                            </g>
                        ))}
                    </svg>
                    <Traffic>903/5 kb</Traffic>
                </StatusCell>
            </StatusBar>
            <DrawToolbar/>
            <FrameToolbar/>
        </Window>
    )
}

const Global = createGlobalStyle`
    body {
        margin: 0;
        background: #f0f0f0;
        overflow: hidden;
    }
    * {
        box-sizing: border-box;
    }
`

const Window = styled.div`
    position: relative;
    display: flex;
    flex-direction: column;
    width: 1024px;
    height: 728px;
    overflow: hidden;
    background: #f0f0f0;
    color: #000;
    font: 11px "DejaVu Sans Condensed", "DejaVu Sans", sans-serif;
    white-space: nowrap;

    svg {
        flex: none;
        display: block;
    }
`

const TitleBar = styled.div`
    display: flex;
    align-items: flex-start;
    height: 22px;
    padding: 3px 1px 0 2px;
    border-top: 1px solid #30343c;
    background: linear-gradient(#86a5cd, #9dbadb 40%, #bdd3ea);
    flex: none;

    > svg {
        margin-top: -1px;
    }
`

const Title = styled.div`
    flex: 1;
    margin-left: 8px;
    font: 12px/14px "Open Sans", sans-serif;
    letter-spacing: -0.3px;
`

const CaptionButton = styled.div<{$close?: boolean}>`
    display: flex;
    align-items: center;
    justify-content: center;
    width: 30px;
    height: 17px;
    margin: -2px 1px 0 2px;
    border: 1px solid #46597a;
    border-radius: 2px;
    box-shadow: inset 0 0 0 1px rgba(255, 255, 255, 0.5);
    background: ${p => p.$close
        ? "linear-gradient(#e0a090, #cf6a58 45%, #b23520 50%, #cd6a50)"
        : "linear-gradient(#cfdeef, #b4cbe4 45%, #93b1d4 50%, #b2cae4)"};
`

const MenuBar = styled.div`
    display: flex;
    height: 21px;
    padding: 2px 1px 0 5px;
    flex: none;
`

const MenuItems = styled.div`
    display: flex;
    flex: 1;
    margin-left: 9px;
    font: 11.5px/15px "Open Sans", sans-serif;
`

const MenuItem = styled.div<{$w: number}>`
    width: ${p => p.$w}px;
    letter-spacing: -0.3px;
`

const MdiButton = styled.div`
    display: flex;
    align-items: center;
    justify-content: center;
    width: 17px;
    height: 17px;
    margin-left: 2px;
    border: 1px solid #a9c0da;
    background: linear-gradient(#fbfdff, #dbe8f6);
`

const Toolbar = styled.div`
    display: flex;
    align-items: center;
    height: 28px;
    border-top: 1px solid #a8a8a8;
    border-bottom: 2px solid #a0a0a0;
    box-shadow: inset 0 1px #fff;
    flex: none;
`

const Slot = styled.div<{$w: number, $ml?: number}>`
    display: flex;
    align-items: center;
    justify-content: center;
    flex: none;
    width: ${p => p.$w}px;
    margin-left: ${p => p.$ml ?? 0}px;
`

const Press = styled(Slot)`
    height: 23px;
    border: 1px solid;
    border-color: #a0a0a0 #fff #fff #a0a0a0;
    background: repeating-conic-gradient(#fff 0 25%, #ececec 0 50%) 0 0 / 2px 2px;
`

const Sep = styled.div<{$ml?: number, $h?: number}>`
    flex: none;
    width: 1px;
    height: ${p => p.$h ?? 22}px;
    margin-left: ${p => p.$ml ?? 0}px;
    background: #a0a0a0;
`

const Grip = styled.div<{$ml?: number}>`
    flex: none;
    width: 3px;
    height: 19px;
    margin: 0 2px 0 ${p => (p.$ml ?? 0) + 2}px;
    background: repeating-linear-gradient(#a8a8a8 0 1px, #f0f0f0 1px 2px);
`

const Arrow = styled.div<{$w: number}>`
    display: flex;
    justify-content: center;
    flex: none;
    width: ${p => p.$w}px;

    &::after {
        content: "";
        border: solid transparent;
        border-width: 3px 3px 0;
        border-top-color: #000;
    }
`

const ToolText = styled.div<{$w: number, $ls: number, $pl?: number}>`
    width: ${p => p.$w}px;
    padding-left: ${p => p.$pl ?? 0}px;
    letter-spacing: ${p => p.$ls}px;
`

const Search = styled.div`
    display: flex;
    align-items: center;
    justify-content: flex-end;
    width: 147px;
    height: 24px;
    margin-left: 1px;
    padding-right: 2px;
    border: 1px solid #a0a0a0;
    border-right-color: #c8c8c8;
    background: #fff;
`

const ChatSlot = styled.div`
    display: flex;
    flex: 1;
    justify-content: center;
`

const Chat = styled.div`
    position: relative;
    display: flex;
    align-items: center;
    justify-content: center;
    width: 17px;
    height: 13px;
    margin: 0 0 3px;
    border-radius: 1px;
    background: #5a6b8c;
    color: #fff;
    font-size: 11px;

    &::after {
        content: "";
        position: absolute;
        left: 5px;
        top: 12px;
        border: solid transparent;
        border-width: 4px 4px 0 0;
        border-top-color: #5a6b8c;
    }
`

const Floating = styled.div<{$left: number, $width: number}>`
    position: absolute;
    top: 0;
    left: ${p => p.$left}px;
    width: ${p => p.$width}px;
    height: 33px;
    padding: 0 6px 6px 7px;
    border: solid #30343c;
    border-width: 0 1px 1px;
    box-shadow: inset -1px -1px #52c8e4, inset 1px 0 #dcebf8;
    background: #b9d0e8;
`

const FloatBody = styled.div`
    display: flex;
    align-items: center;
    height: 26px;
    padding-left: 1px;
    background: #f0f0f0;
`

const ToolLetter = styled.div`
    color: #555;
    font-size: 12px;
    font-weight: bold;
`

const Frames = styled.div`
    display: flex;
    margin-left: -1px;
`

const Timeframe = styled.div<{$active: boolean}>`
    display: flex;
    align-items: center;
    justify-content: center;
    flex: none;
    width: ${p => p.$active ? 26 : 28}px;
    height: 23px;
    margin: 0 ${p => p.$active ? 1 : 0}px;
    border: 1px solid;
    border-color: ${p => p.$active ? "#a0a0a0 #fff #fff #a0a0a0" : "transparent"};
    background: ${p => p.$active ? "#f8f8f8" : "none"};
    color: #444;
    font-size: 10.3px;
`

const ChartSvg = styled.svg`
    height: 476px;
`

const ChartTabs = styled.div`
    display: flex;
    height: 22px;
    padding-left: 2px;
    border-top: 1px solid #000;
    background: #f0f0f0;
    box-shadow: inset 0 -1px #fff;
    flex: none;
    z-index: 1;
`

const ChartTab = styled.div<{$w: number, $active: boolean, $line: boolean}>`
    position: relative;
    display: flex;
    justify-content: center;
    flex: none;
    width: ${p => p.$w}px;
    height: 19px;
    margin-top: ${p => p.$active ? -1 : 0}px;
    padding-right: ${p => p.$active ? 2 : 0}px;
    border: ${p => p.$active ? "1px solid #000" : "none"};
    border-top: none;
    background: ${p => p.$active ? "#fff" : "none"};
    color: ${p => p.$active ? "#000" : "#6d6d6d"};
    line-height: ${p => p.$active ? 19 : 17}px;
    font-size: 11.4px;

    &::after {
        content: "";
        display: ${p => p.$line && !p.$active ? "block" : "none"};
        position: absolute;
        right: 0;
        top: 2px;
        width: 1px;
        height: 13px;
        background: #6d6d6d;
    }
`

const TabArrows = styled.div`
    display: flex;
    align-items: center;
    height: 19px;
    margin-left: 1px;
`

const Terminal = styled.div`
    display: flex;
    height: 136px;
    padding-top: 2px;
    flex: none;
`

const Side = styled.div`
    display: flex;
    flex-direction: column;
    align-items: center;
    width: 15px;
    flex: none;
`

const SideClose = styled.div`
    height: 14px;
    padding: 2px 2px 0 0;
`

const SideStrip = styled.div`
    width: 13px;
    height: 119px;
    padding-top: 2px;
    background: linear-gradient(#bacce2, #d8e4f2);
    color: #444;
    font-size: 10.5px;
    line-height: 13px;
    writing-mode: vertical-rl;
    transform: rotate(180deg);
`

const Panel = styled.div`
    width: 1006px;
    height: 132px;
    border-top: 1px solid #a0a0a0;
    border-left: 1px solid #a0a0a0;
    background: #fff;
`

const columns = "85px 119px 59px 46px 59px 66px 66px 66px 66px 66px 99px 1fr";

const HeadRow = styled.div`
    display: grid;
    grid-template-columns: ${columns};
    height: 25px;
    border-bottom: 1px solid #c8c8c8;
    background: linear-gradient(#fff 40%, #f2f4f7 45%, #f2f4f7 92%, #d5d5d5 92%);
    font-size: 11.3px;
`

const HeadCell = styled.div<{$left: boolean}>`
    display: flex;
    align-items: center;
    justify-content: ${p => p.$left ? "flex-start" : "flex-end"};
    gap: 12px;
    padding: 0 5px 0 6px;
    border-right: 1px solid #dfe3e8;
`

const OrderRow = styled.div<{$alt: boolean}>`
    display: grid;
    grid-template-columns: ${columns};
    height: 20px;
    border-bottom: 1px solid #c0c0c0;
    background: ${p => p.$alt ? "#ebebeb" : "#fff"};
    letter-spacing: -0.25px;
`

const Cell = styled.div<{$left: boolean, $hit: boolean}>`
    display: flex;
    align-items: center;
    justify-content: ${p => p.$left ? "flex-start" : "flex-end"};
    gap: 4px;
    padding: 0 2px 1px;
    border-right: 1px solid #c0c0c0;
    background: ${p => p.$hit ? "#60f060" : "none"};
    background-clip: padding-box;
`

const CloseMark = styled.span`
    margin: 0 3px 0 5px;
`

const Summary = styled.div`
    display: flex;
    align-items: center;
    height: 19px;
    padding: 0 0 1px 3px;
    background: #c8c8c8;
    font-size: 10.5px;
    font-weight: bold;
`

const Balance = styled.div`
    width: 724px;
    margin-left: 6px;
    letter-spacing: -0.27px;
`

const Total = styled.div`
    width: 28px;
    text-align: right;
    letter-spacing: -0.27px;
`

const TerminalTabs = styled.div`
    display: flex;
    height: 20px;
    margin-top: 7px;
    padding-left: 2px;
    border-top: 1px solid #000;
    background: #f0f0f0;
`

const TerminalTab = styled.div<{$w: number, $active: boolean}>`
    position: relative;
    display: flex;
    align-items: center;
    justify-content: center;
    width: ${p => p.$w}px;
    height: 18px;
    margin-top: -1px;
    padding-top: ${p => p.$active ? 0 : 2}px;
    border: ${p => p.$active ? "1px solid #000" : "none"};
    border-top: none;
    background: ${p => p.$active ? "#fff" : "none"};
    color: ${p => p.$active ? "#000" : "#6d6d6d"};

    &::after {
        content: "";
        display: ${p => p.$active ? "none" : "block"};
        position: absolute;
        right: 0;
        top: 4px;
        width: 1px;
        height: 12px;
        background: #6d6d6d;
    }
`

const Count = styled.span`
    margin: 3px 0 0 2px;
    color: #f00;
    font-size: 8.5px;
    font-weight: bold;
`

const StatusBar = styled.div`
    display: flex;
    align-items: center;
    height: 22px;
    margin-top: 1px;
    padding-top: 2px;
    border-top: 1px solid #a0a0a0;
    flex: none;
`

const StatusHelp = styled.div`
    width: 298px;
    padding-left: 2px;
`

const StatusCell = styled.div<{$w: number, $ls?: number}>`
    display: flex;
    align-items: center;
    width: ${p => p.$w}px;
    height: 16px;
    padding-left: 5px;
    border-left: 1px solid #a0a0a0;
    letter-spacing: ${p => p.$ls ?? -0.2}px;
    flex: none;
`

const Traffic = styled.span`
    margin-left: 43px;
`
